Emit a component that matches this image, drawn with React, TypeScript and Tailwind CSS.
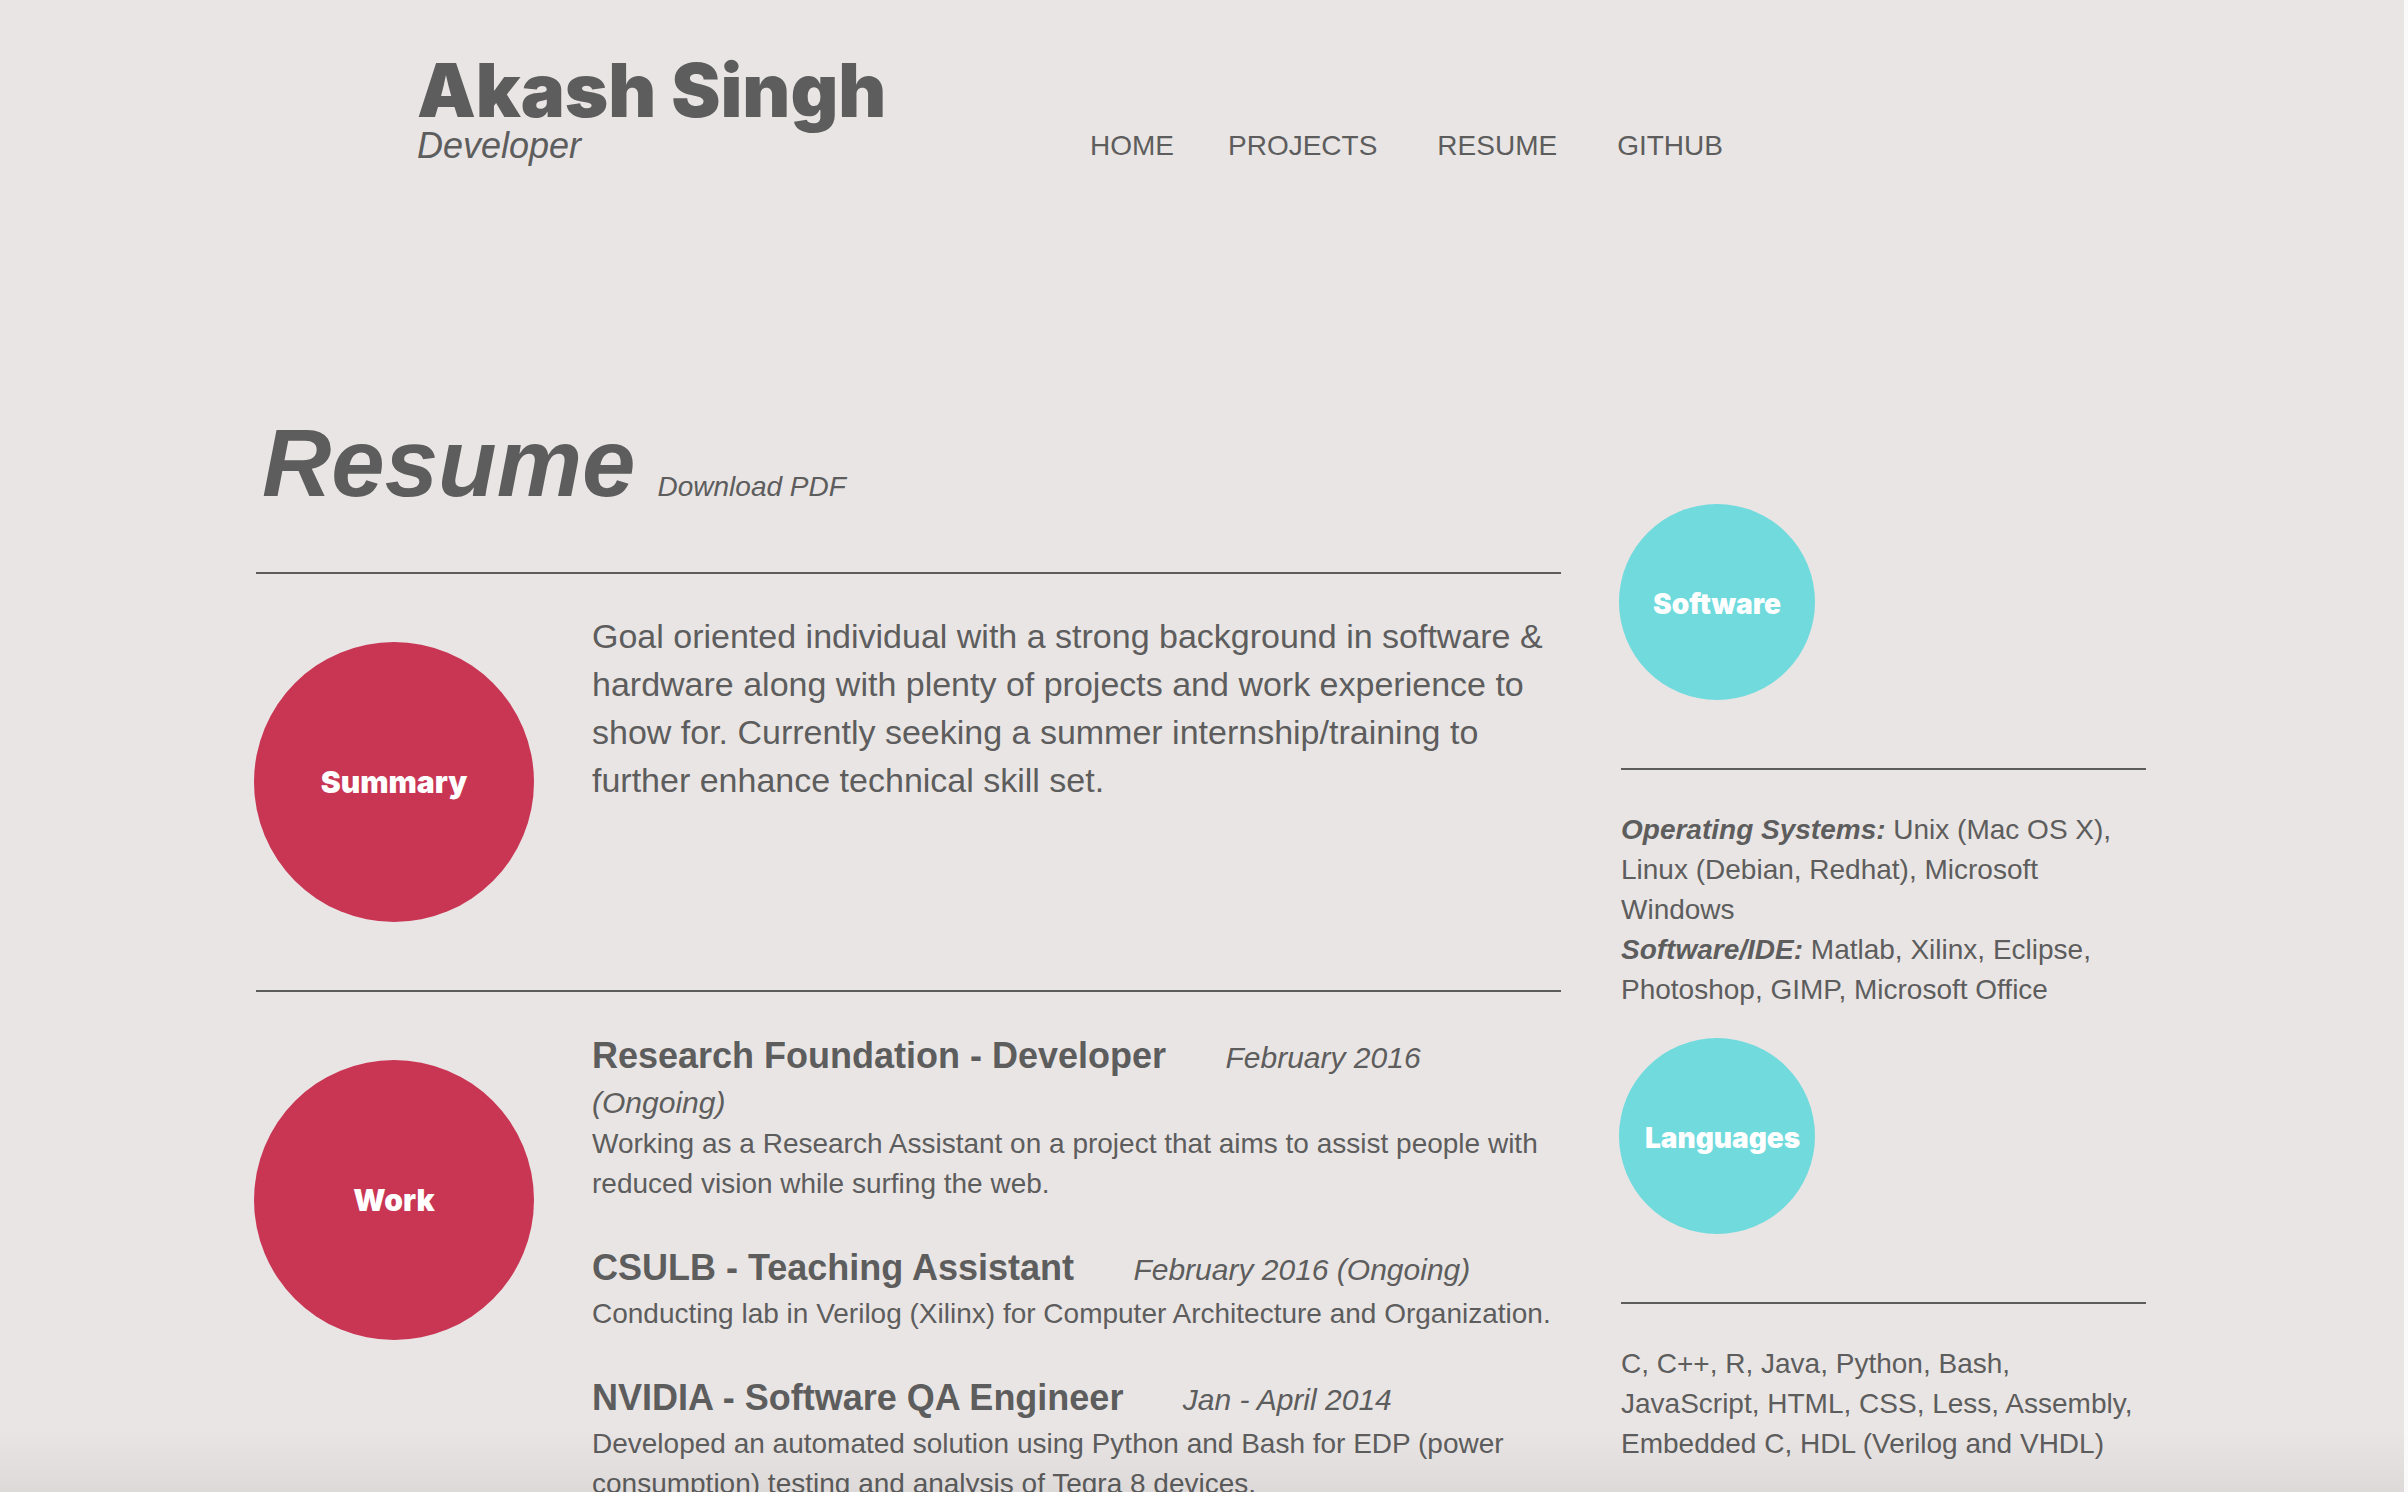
import type { ReactNode } from "react";

const navItems = [
  { label: "HOME", space: "mr-[54px]" },
  { label: "PROJECTS", space: "mr-[60px]" },
  { label: "RESUME", space: "mr-[60px]" },
  { label: "GITHUB", space: "" },
];

const jobs = [
  {
    title: "Research Foundation - Developer",
    date: "February 2016 (Ongoing)",
    text: "Working as a Research Assistant on a project that aims to assist people with reduced vision while surfing the web.",
  },
  {
    title: "CSULB - Teaching Assistant",
    date: "February 2016 (Ongoing)",
    text: "Conducting lab in Verilog (Xilinx) for Computer Architecture and Organization.",
  },
  {
    title: "NVIDIA - Software QA Engineer",
    date: "Jan - April 2014",
    text: "Developed an automated solution using Python and Bash for EDP (power consumption) testing and analysis of Tegra 8 devices.",
  },
];

function Section({ label, children }: { label: string; children: ReactNode }) {
  return (
    <section className="flex min-h-[418px] items-start border-t-2 border-[#5d5d5d]">
      <div className="-ml-0.5 mt-[68px] flex size-[280px] shrink-0 items-center justify-center rounded-full bg-[#c83654]">
        <h2 className="font-['Inter'] text-[30px] leading-[40px] font-black text-white">{label}</h2>
      </div>
      <div className="ml-[58px] min-w-0 flex-1 pt-[38px] pr-2">{children}</div>
    </section>
  );
}

function Skill({ label, children }: { label: string; children: ReactNode }) {
  return (
    <section className="mb-7">
      <div className="-ml-0.5 mb-[68px] flex size-[196px] items-center rounded-full bg-[#70dadd] px-[26px] pt-1">
        <h2 className="w-full text-center font-['Inter'] text-[28px] leading-[40px] font-black text-white">{label}</h2>
      </div>
      <div className="border-t-2 border-[#5d5d5d] pt-10 text-[28px] leading-[40px]">{children}</div>
    </section>
  );
}

export default function App() {
  return (
    <div className="relative h-screen overflow-hidden border-r-4 border-[#fafafa] bg-[#e9e5e4] font-['Liberation_Sans',Arial,sans-serif] text-[#5d5d5d]">
      <div className="h-full overflow-y-auto [scrollbar-width:none]">
        <div className="mx-auto max-w-[1892px]">
          <header className="flex items-end pl-[161px] pt-[54px]">
            <div className="w-[673px]">
              <h1 className="whitespace-nowrap font-['Inter'] text-[74px] leading-[72px] font-black">Akash Singh</h1>
              <p className="text-[36px] leading-[40px] italic">Developer</p>
            </div>
            <nav className="flex text-[28px] leading-[40px]">
              {navItems.map((item) => (
                <a key={item.label} href="#" className={item.space}>
                  {item.label}
                </a>
              ))}
            </nav>
          </header>

          <div className="flex gap-[60px] pt-[242px]">
            <main className="min-w-0 flex-1">
              <div className="mb-[54px] flex items-baseline gap-[22px] pl-1.5">
                <h1 className="text-[96px] leading-[110px] font-bold italic">Resume</h1>
                <a href="#" className="text-[28px] italic">
                  Download PDF
                </a>
              </div>
              <Section label="Summary">
                <p className="text-[34px] leading-[48px]">
                  Goal oriented individual with a strong background in software &amp; hardware along with plenty of
                  projects and work experience to show for. Currently seeking a summer internship/training to further
                  enhance technical skill set.
                </p>
              </Section>
              <Section label="Work">
                {jobs.map((job) => (
                  <article key={job.title} className="mb-[38px]">
                    <h3 className="text-[30px] leading-[42px]">
                      <span className="mr-[51px] text-[36px] leading-[52px] font-bold">{job.title}</span>{" "}
                      <em>{job.date}</em>
                    </h3>
                    <p className="text-[28px] leading-[40px]">{job.text}</p>
                  </article>
                ))}
              </Section>
            </main>

            <aside className="w-[527px] shrink-0 pt-[96px] pr-0.5">
              <Skill label="Software">
                <p>
                  <strong className="italic">Operating Systems:</strong> Unix (Mac OS X), Linux (Debian, Redhat),
                  Microsoft Windows
                </p>
                <p>
                  <strong className="italic">Software/IDE:</strong> Matlab, Xilinx, Eclipse, Photoshop, GIMP, Microsoft
                  Office
                </p>
              </Skill>
              <Skill label="Languages">
                <p>
                  C, C++, R, Java, Python, Bash, JavaScript, HTML, CSS, Less, Assembly, Embedded C, HDL (Verilog and
                  VHDL)
                </p>
              </Skill>
            </aside>
          </div>
        </div>
      </div>
      <div className="pointer-events-none absolute inset-x-0 bottom-0 h-16 bg-linear-to-b from-black/0 to-black/5" />
    </div>
  );
}
